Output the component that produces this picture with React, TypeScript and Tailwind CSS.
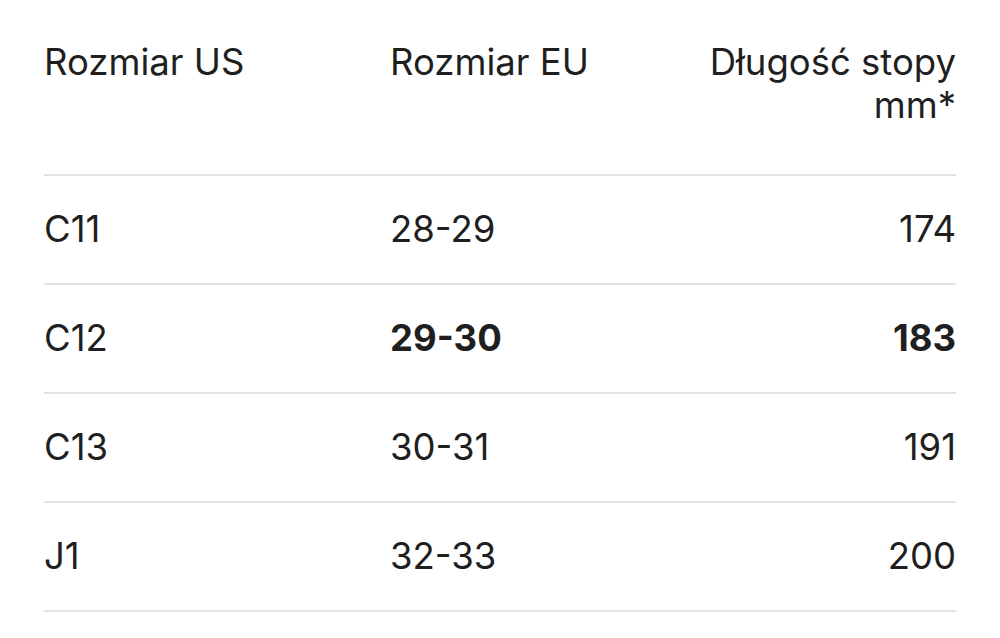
const rows = [
  { us: "C11", eu: "28-29", mm: "174", bold: false },
  { us: "C12", eu: "29-30", mm: "183", bold: true },
  { us: "C13", eu: "30-31", mm: "191", bold: false },
  { us: "J1", eu: "32-33", mm: "200", bold: false },
];

export default function App() {
  return (
    <div className="w-[1000px] h-[638px] bg-white overflow-hidden px-[44px] text-[#1f1f1f] font-['Inter',sans-serif]">
      {/* Header */}
      <div className="grid grid-cols-[346px_1fr_260px] pt-[41px] pb-[47px] border-b-2 border-[#e3e3e3] text-[36.5px] leading-[43px]">
        <div>Rozmiar US</div>
        <div>Rozmiar EU</div>
        <div className="text-right">Długość stopy mm*</div>
      </div>

      {/* Rows */}
      {rows.map((r) => (
        <div
          key={r.us}
          className="grid grid-cols-[346px_1fr_260px] items-center h-[109px] border-b-2 border-[#e3e3e3] text-[36.5px]"
        >
          <div>{r.us}</div>
          <div className={r.bold ? "font-bold" : ""}>{r.eu}</div>
          <div className={`text-right ${r.bold ? "font-bold" : ""}`}>{r.mm}</div>
        </div>
      ))}
    </div>
  );
}
